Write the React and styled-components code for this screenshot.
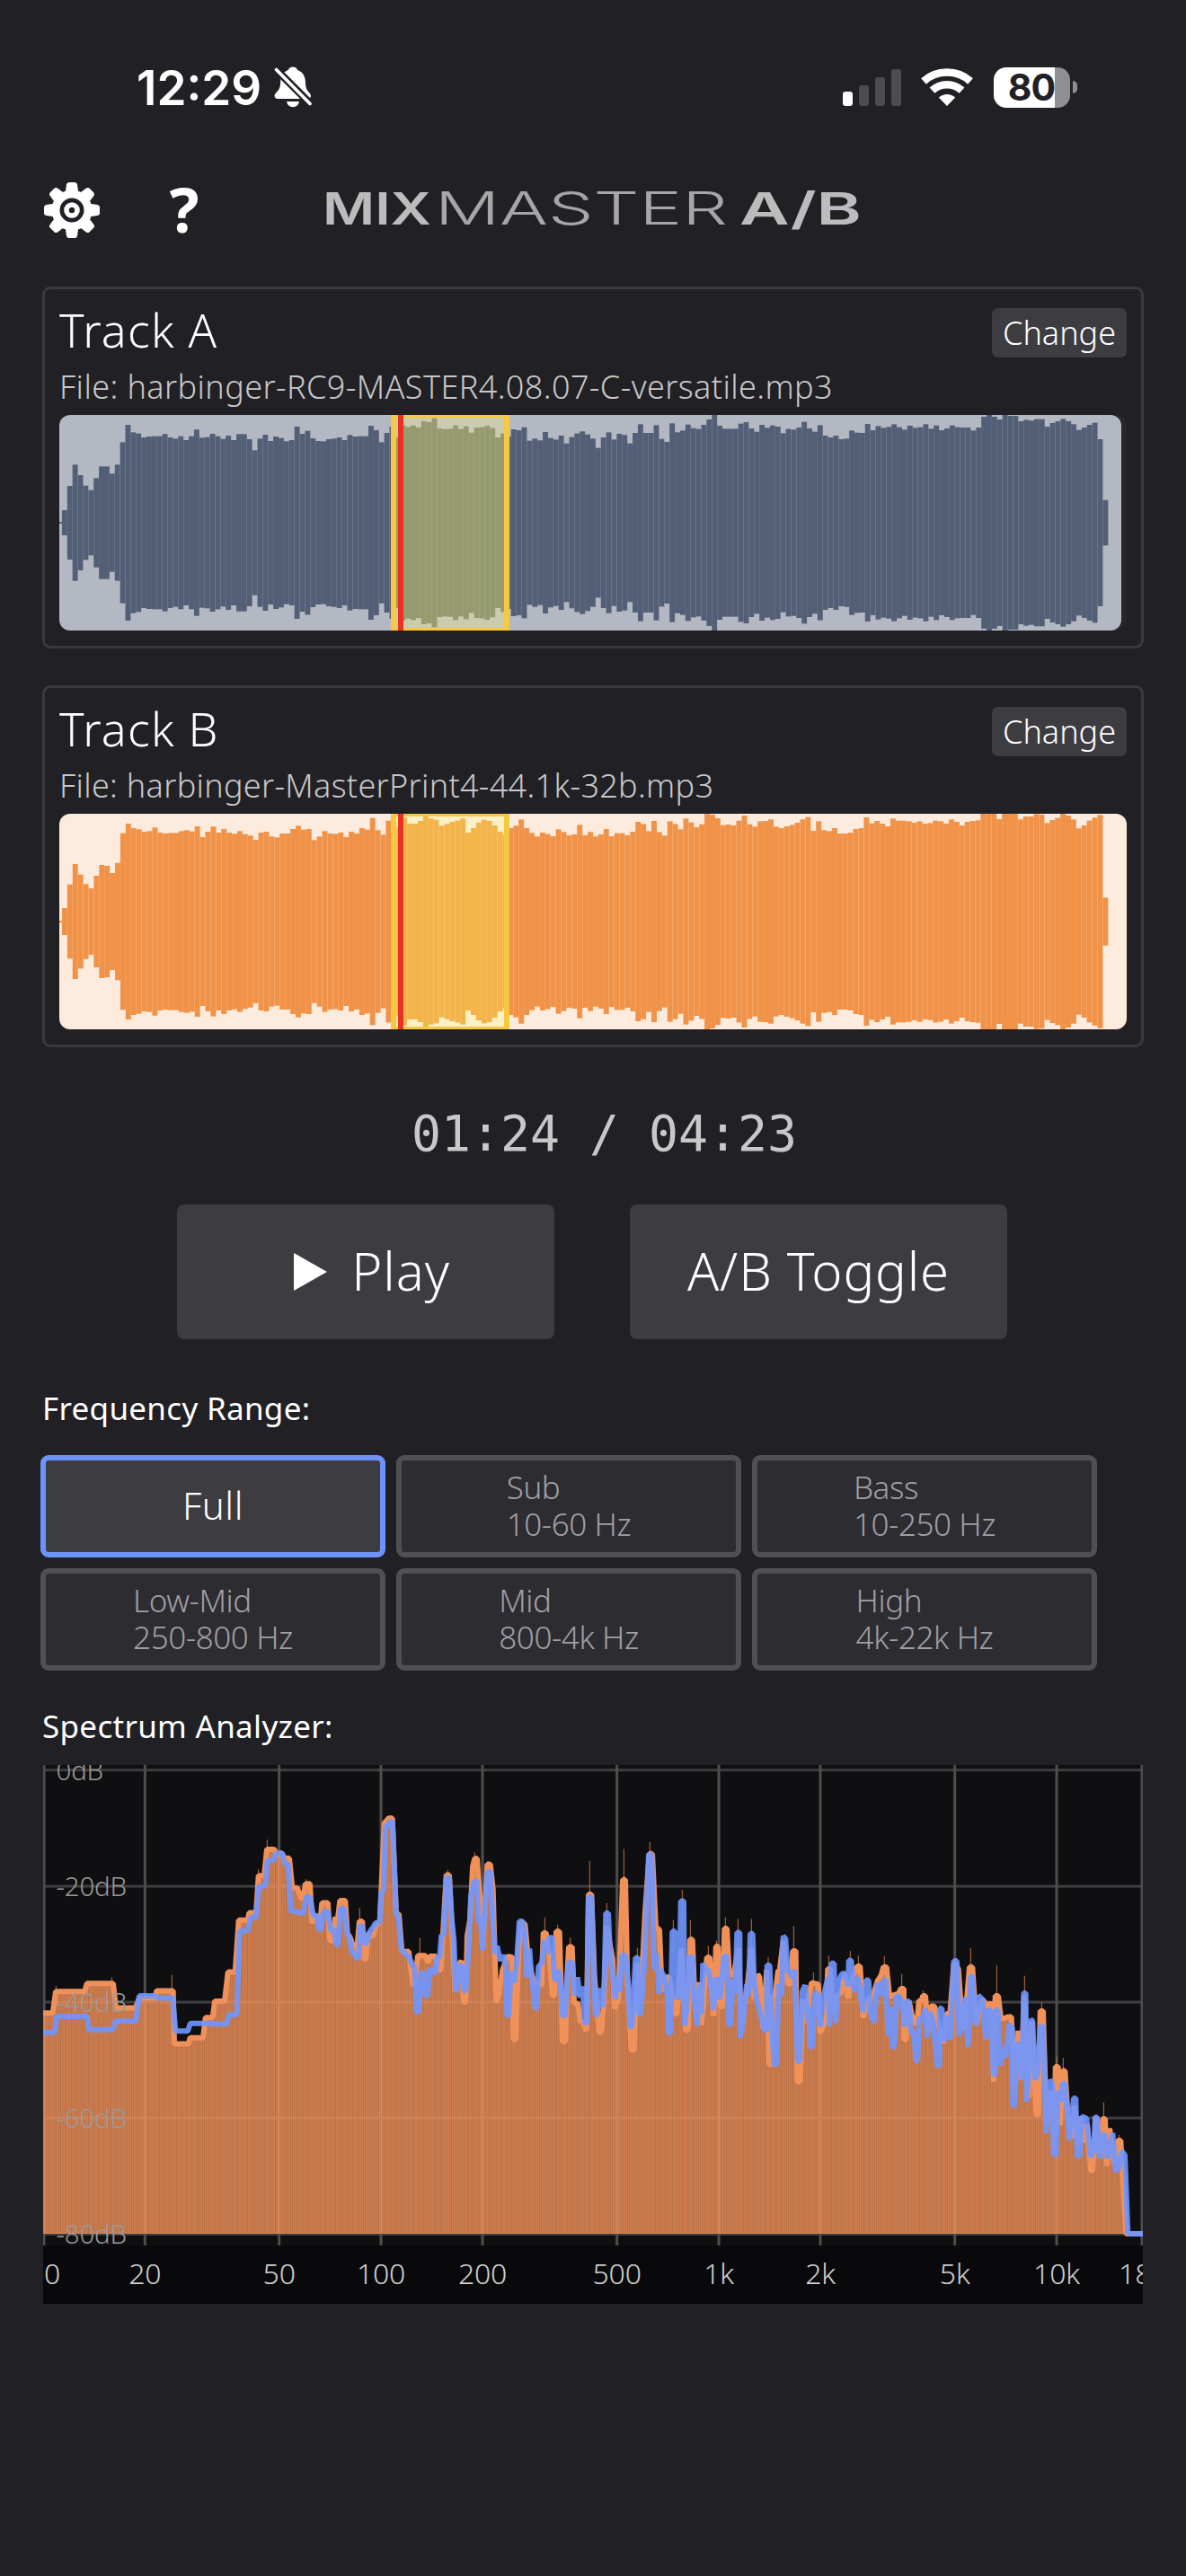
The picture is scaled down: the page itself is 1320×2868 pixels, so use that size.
import React from "react";
import styled, { createGlobalStyle } from "styled-components";

const GlobalStyle = createGlobalStyle`
  * {
    box-sizing: border-box;
  }
  body {
    margin: 0;
    background: #212025;
    color: #fff;
    font-family: "Noto Sans", "Open Sans", sans-serif;
    font-weight: 300;
  }
  button {
    font: inherit;
    color: inherit;
    border: none;
    margin: 0;
    padding: 0;
  }
`;

const Screen = styled.main`
  width: 1320px;
  height: 2868px;
  background: #212025;
  overflow: hidden;
`;

const StatusBar = styled.div`
  display: flex;
  align-items: center;
  height: 194px;
  padding: 0 121px 0 152px;
`;

const Clock = styled.span`
  font-family: Inter, sans-serif;
  font-weight: 600;
  font-size: 53px;
  line-height: 60px;
  padding-top: 2px;
  margin-right: 14px;
`;

const StatusIcons = styled.div`
  display: flex;
  align-items: center;
  margin-left: auto;
`;

const Signal = styled.div`
  display: flex;
  align-items: flex-end;
  gap: 7px;
  height: 41px;
  margin-right: 22px;
`;

const SignalBar = styled.span`
  width: 11px;
  height: ${p => p.$height}px;
  border-radius: 3px;
  background: ${p => (p.$on ? "#fff" : "#4d4c51")};
`;

const Battery = styled.div`
  display: flex;
  align-items: center;
  gap: 3px;
  margin-left: 23px;
`;

const BatteryBody = styled.div`
  width: 85px;
  height: 45px;
  padding-right: 1px;
  border-radius: 14px;
  background: linear-gradient(to right, #fff 80%, #8e8e93 80%);
  color: #212025;
  font-family: Inter, sans-serif;
  font-weight: 700;
  font-size: 41px;
  line-height: 45px;
  letter-spacing: -1px;
  text-align: center;
`;

const BatteryTip = styled.span`
  width: 5px;
  height: 14px;
  border-radius: 0 5px 5px 0;
  background: #8e8e93;
`;

const Header = styled.header`
  display: flex;
  align-items: center;
  height: 80px;
  padding-left: 48px;
`;

const IconButton = styled.button`
  display: flex;
  width: 64px;
  background: transparent;
`;

const HelpButton = styled.button`
  width: 40px;
  margin: 0 135px 0 73px;
  padding-bottom: 4px;
  background: transparent;
  font-weight: 700;
  font-size: 69px;
  line-height: 76px;
`;

const LogoText = styled.text`
  font-family: Inter, sans-serif;
  font-size: 50px;
  font-weight: ${p => p.$weight};
  fill: ${p => p.$color};
`;

const Content = styled.div`
  display: flex;
  flex-direction: column;
  padding: 45px 47px 0;
`;

const Card = styled.section`
  height: 403px;
  padding: 10px 16px 17px;
  margin-bottom: 41px;
  border: 3px solid #3a3a3c;
  border-radius: 9px;
`;

const CardHead = styled.div`
  display: flex;
  justify-content: space-between;
  height: 70px;
`;

const CardTitle = styled.h2`
  margin: 0;
  font-size: 52px;
  font-weight: 300;
  line-height: 70px;
  letter-spacing: 1.2px;
`;

const ChangeButton = styled.button`
  width: 150px;
  height: 55px;
  margin-top: 11px;
  border-radius: 7px;
  background: #3d3c41;
  font-size: 36px;
  line-height: 53px;
`;

const FileName = styled.p`
  margin: 4px 0 6px;
  font-size: 36px;
  line-height: 50px;
  color: #c8c8c8;
  white-space: nowrap;
  letter-spacing: ${p => p.$spacing};
`;

const WaveFrame = styled.div`
  height: 240px;
  border-radius: 12px;
  background: #27272b;
`;

const Wave = styled.svg`
  display: block;
  border-radius: 12px;
  background: ${p => p.$background};
`;

const Time = styled.div`
  margin-top: 15px;
  padding-left: 25px;
  text-align: center;
  font-family: "DejaVu Sans Mono", monospace;
  font-size: 54.8px;
  font-weight: 400;
  line-height: 80px;
  color: #c8c8c8;
`;

const Transport = styled.div`
  display: flex;
  gap: 84px;
  margin: 39px 0 0 150px;
`;

const BigButton = styled.button`
  display: flex;
  align-items: center;
  justify-content: center;
  gap: 27px;
  width: 420px;
  height: 150px;
  padding-bottom: 3px;
  border-radius: 8px;
  background: #3d3c41;
  font-size: 58px;
  letter-spacing: 0.9px;
`;

const PlayIcon = styled.svg`
  width: 37px;
  height: 42px;
  margin: 3px 0 0 14px;
`;

const Label = styled.h3`
  margin: ${p => p.$top}px 0 0;
  font-size: 35px;
  font-weight: 400;
  line-height: 50px;
  letter-spacing: 0.3px;
`;

const Filters = styled.div`
  display: grid;
  grid-template-columns: repeat(3, 384px);
  grid-auto-rows: 114px;
  gap: 12px;
  margin: 27px 0 0 -2px;
`;

const FilterButton = styled.button`
  display: flex;
  align-items: center;
  justify-content: center;
  padding-bottom: ${p => (p.$active ? 4 : 2)}px;
  border: 6px solid ${p => (p.$active ? "#6d93fb" : "#504f54")};
  border-radius: 9px;
  background: ${p => (p.$active ? "#3d3c41" : "#2d2c31")};
  color: ${p => (p.$active ? "#fff" : "#a09fa4")};
  font-size: ${p => (p.$active ? 42 : 35)}px;
  line-height: 41px;
  letter-spacing: ${p => (p.$active ? 0.5 : -0.4)}px;
  text-align: left;
`;

const Analyzer = styled.svg`
  display: block;
  margin: 18px 0 0 1px;
`;

const AxisText = styled.text`
  font-family: "Noto Sans", sans-serif;
  font-size: ${p => p.$size}px;
  font-weight: 300;
  letter-spacing: ${p => p.$spacing}px;
  fill: ${p => p.$color};
`;

// Distance of each bar's top from the top edge, in thirds of a pixel
const WAVE_A = [
  318, 237, 166, 201, 236, 251, 211, 172, 172, 196, 166, 91, 33, 58, 62, 75, 72, 71, 71, 64,
  75, 79, 71, 84, 71, 49, 76, 74, 63, 71, 80, 69, 84, 64, 64, 81, 118, 79, 66, 87,
  72, 77, 88, 84, 39, 63, 53, 78, 87, 88, 81, 79, 75, 84, 67, 72, 71, 71, 36, 51,
  91, 60, 39, 75, 34, 40, 35, 42, 21, 24, 11, 45, 47, 46, 35, 47, 38, 59, 42, 41,
  36, 44, 75, 62, 72, 48, 51, 41, 86, 79, 85, 57, 77, 82, 69, 95, 74, 62, 55, 65,
  79, 110, 75, 58, 82, 63, 67, 95, 60, 31, 60, 60, 34, 80, 90, 28, 58, 52, 32, 44,
  47, 33, 15, 0, 36, 46, 46, 46, 29, 24, 45, 56, 33, 43, 35, 39, 61, 47, 49, 42,
  23, 45, 56, 34, 69, 75, 69, 81, 79, 52, 59, 60, 30, 51, 37, 43, 40, 31, 41, 49,
  36, 43, 41, 31, 46, 35, 51, 45, 35, 41, 42, 42, 52, 42, 6, 0, 6, 15, 0, 3,
  3, 21, 16, 19, 14, 14, 39, 27, 21, 13, 21, 31, 50, 42, 33, 26, 81, 284,
];

const WAVE_B = [
  315, 236, 168, 203, 235, 249, 207, 171, 174, 198, 164, 65, 33, 48, 52, 60, 58, 46, 63, 66,
  64, 64, 58, 55, 59, 42, 78, 60, 43, 63, 51, 63, 67, 58, 68, 73, 87, 63, 60, 76,
  79, 66, 66, 51, 40, 53, 51, 88, 76, 58, 66, 67, 63, 78, 60, 66, 48, 53, 14, 55,
  70, 23, 24, 45, 13, 33, 33, 24, 9, 16, 20, 40, 34, 27, 23, 16, 63, 48, 30, 20,
  24, 39, 60, 70, 48, 40, 19, 48, 64, 76, 63, 68, 75, 52, 61, 72, 69, 37, 72, 61,
  76, 69, 51, 75, 65, 65, 72, 60, 27, 34, 58, 24, 61, 73, 25, 34, 52, 16, 29, 45,
  35, 0, 3, 15, 38, 36, 39, 23, 6, 35, 43, 25, 24, 19, 43, 48, 42, 37, 30, 19,
  11, 57, 25, 55, 58, 48, 66, 66, 63, 51, 48, 12, 32, 24, 33, 42, 16, 23, 23, 25,
  30, 25, 33, 31, 23, 25, 33, 19, 27, 39, 27, 24, 22, 0, 0, 0, 18, 0, 0, 0,
  19, 9, 9, 1, 3, 31, 21, 14, 0, 6, 19, 49, 39, 23, 13, 4, 280,
];

// Spectrum curves as "x,y" pairs in raw chart units, see toX and toY
const SPECTRUM_B = `24,738 56,738 66,679 163,679 170,657 258,657 267,724 333,724 345,697 398,697 403,677 458,677
462,822 509,822 515,805 558,805 566,750 590,750 597,705 630,705 641,626 665,626 677,484 707,484 712,464 735,464
743,363 762,363 771,291 796,291 803,305 820,301 830,315 846,315 856,395 873,397 885,425 892,425 900,385 915,385
922,492 938,470 947,505 955,437 975,437 981,540 993,540 1000,475 1005,500 1015,431 1033,431 1040,520 1048,530
1060,557 1070,580 1080,487 1090,487 1095,590 1102,590 1110,520 1125,530 1135,500 1148,487 1153,405 1163,220
1178,206 1190,206 1203,468 1212,468 1222,570 1245,570 1258,660 1265,660 1275,581 1300,581 1310,600 1315,583
1335,583 1345,620 1352,620 1370,361 1380,361 1390,520 1400,678 1410,610 1420,595 1428,708 1435,708 1440,528
1450,480 1458,340 1465,316 1473,316 1482,420 1492,560 1507,332 1517,332 1526,400 1537,708 1545,690 1558,620
1575,583 1590,585 1594,810 1602,810 1612,560 1620,490 1633,495 1645,600 1665,660 1675,650 1688,665 1694,519
1703,519 1714,580 1725,690 1731,690 1737,515 1748,515 1758,816 1768,816 1773,650 1779,557 1790,557 1797,710
1810,712 1817,762 1826,762 1838,787 1845,414 1855,414 1865,640 1880,790 1888,790 1897,700 1906,500 1925,590
1932,726 1945,700 1959,374 1968,374 1975,645 1988,839 1997,839 2006,600 2018,700 2028,560 2034,461 2048,303
2058,303 2070,505 2082,510 2090,678 2102,640 2115,640 2132,740 2140,740 2155,560 2170,788 2178,780 2183,537
2192,537 2200,700 2215,655 2222,770 2230,700 2240,586 2250,586 2262,745 2268,700 2270,556 2278,556 2285,720
2293,720 2299,507 2307,507 2315,632 2330,632 2345,560 2355,770 2375,670 2388,560 2398,700 2410,632 2416,640
2428,780 2440,620 2448,878 2457,878 2460,692 2468,692 2478,622 2483,622 2495,540 2510,658 2522,658 2527,568
2537,568 2542,925 2552,925 2560,700 2572,765 2580,692 2590,655 2612,659 2618,792 2626,780 2638,750 2644,617
2652,617 2660,730 2675,690 2690,680 2700,630 2712,698 2722,650 2743,610 2752,610 2762,750 2780,700 2795,690
2810,650 2822,635 2830,612 2840,612 2850,692 2880,685 2888,671 2898,671 2898,810 2905,810 2915,705 2930,765
2942,765 2948,704 2958,704 2961,691 2970,691 2980,790 2988,719 3000,719 3010,760 3030,820 3040,740 3052,740
3065,600 3080,618 3092,760 3100,780 3117,612 3127,612 3140,770 3160,700 3180,720 3190,708 3198,925 3203,691
3213,691 3222,752 3235,752 3245,748 3257,748 3268,960 3280,786 3290,920 3300,690 3315,970 3325,760 3340,1015
3348,1015 3353,732 3363,732 3374,1040 3390,950 3400,1110 3404,884 3413,884 3420,1044 3428,895 3436,895
3445,1010 3458,1080 3468,990 3480,1100 3490,1020 3495,1090 3510,1040 3522,1168 3528,1168 3540,1020 3555,1120
3562,1026 3570,1026 3575,1155 3585,1052 3600,1150 3613,1085 3622,1085 3640,1340 3696,1340`;

const SPECTRUM_A = `24,791 62,791 70,747 170,747 177,783 257,783 265,760 333,760 345,691 400,691 405,697 457,697
466,787 507,787 515,766 595,766 600,768 637,768 645,742 671,742 680,514 707,513 717,477 735,476 745,392 766,391
773,322 795,320 801,302 823,302 830,330 842,332 851,460 872,461 882,466 894,464 902,421 915,421 926,472 938,472
945,510 952,510 960,461 975,461 985,512 997,512 1003,552 1009,552 1017,453 1029,453 1040,524 1046,530 1055,570
1060,572 1070,588 1078,586 1082,500 1090,500 1098,548 1104,548 1115,515 1125,505 1135,492 1148,490 1153,408
1161,404 1167,230 1176,225 1183,215 1190,215 1203,470 1210,475 1220,565 1232,575 1243,582 1257,605 1265,615
1270,735 1278,735 1287,625 1297,630 1300,690 1308,690 1316,615 1325,630 1335,625 1340,585 1348,585 1354,525
1362,525 1370,368 1380,368 1388,480 1396,540 1401,675 1407,675 1413,608 1422,610 1429,677 1435,677 1445,560
1452,420 1464,378 1472,378 1477,490 1484,475 1491,566 1497,480 1508,352 1517,352 1525,470 1532,575 1540,555
1550,595 1560,580 1568,600 1573,745 1579,745 1585,625 1597,655 1605,600 1614,487 1625,487 1632,520 1638,640
1648,562 1655,640 1667,725 1673,725 1678,612 1690,600 1697,540 1707,575 1714,532 1724,532 1731,640 1738,650
1745,620 1751,660 1759,745 1767,745 1773,640 1782,595 1792,605 1798,690 1808,640 1817,695 1825,665 1833,765
1840,765 1845,421 1855,421 1862,600 1868,745 1875,740 1880,670 1893,722 1898,640 1903,465 1911,465 1918,590
1927,640 1935,700 1942,640 1950,680 1956,580 1968,580 1978,660 1984,775 1990,775 2002,587 2010,587 2012,740
2020,740 2032,600 2046,305 2056,305 2064,620 2073,575 2080,685 2086,620 2098,640 2108,690 2112,793 2118,793
2125,515 2134,515 2140,700 2148,690 2153,432 2163,432 2166,772 2174,720 2182,585 2192,585 2198,700 2208,773
2217,660 2222,740 2227,602 2236,620 2245,620 2252,650 2262,730 2272,640 2284,700 2297,583 2306,583 2314,770
2320,770 2327,645 2334,685 2341,518 2350,518 2352,805 2360,770 2373,660 2380,690 2385,521 2393,521 2398,650
2406,700 2420,745 2432,785 2440,785 2441,607 2450,607 2456,745 2464,878 2472,878 2480,660 2485,670 2490,690
2495,528 2503,535 2510,620 2525,640 2533,620 2543,870 2550,870 2558,680 2568,662 2577,760 2580,720 2585,830
2592,830 2602,680 2612,690 2618,775 2630,690 2645,640 2650,775 2656,602 2665,602 2670,765 2680,650 2692,630
2702,630 2712,665 2714,594 2722,594 2732,680 2745,640 2755,700 2762,735 2772,648 2780,648 2786,735 2798,765
2810,655 2822,690 2830,648 2838,648 2845,800 2855,720 2860,830 2867,830 2873,690 2885,695 2897,740 2900,775
2906,705 2915,705 2922,790 2932,790 2938,868 2944,868 2950,750 2960,760 2970,725 2976,805 2985,735 2995,760
3010,882 3017,882 3017,725 3025,725 3033,815 3045,745 3053,810 3065,595 3075,595 3083,800 3093,760 3102,695
3112,830 3118,750 3121,636 3127,640 3135,760 3142,770 3147,690 3160,700 3172,810 3178,730 3188,730 3197,905
3203,905 3205,730 3212,730 3220,880 3230,830 3238,860 3250,768 3260,780 3262,990 3268,990 3276,825 3285,820
3293,920 3298,683 3305,683 3307,980 3315,900 3321,755 3328,760 3336,920 3345,900 3353,775 3363,775 3373,1065
3378,1000 3385,920 3393,930 3398,1125 3406,1125 3412,950 3420,980 3428,930 3436,930 3445,1020 3451,1085
3460,1010 3465,970 3472,970 3477,1130 3485,1125 3492,1020 3508,1025 3522,1130 3533,1110 3536,1022 3543,1022
3552,1135 3562,1070 3568,1070 3578,1135 3595,1065 3605,1170 3615,1160 3626,1115 3636,1125 3646,1340 3696,1340`;

const PEAKS = [
  [67, 664], [253, 640], [454, 634], [743, 346], [772, 265], [902, 373], [1081, 452], [1282, 533],
  [1375, 347], [1465, 300], [1699, 477], [1742, 497], [1784, 532], [1849, 323], [1906, 438],
  [1963, 290], [2008, 560], [2050, 271], [2128, 484], [2158, 402], [2185, 484], [2245, 555],
  [2272, 540], [2302, 477], [2344, 481], [2389, 481], [2445, 585], [2530, 500], [2596, 627],
  [2647, 581], [2719, 568], [2746, 581], [2833, 583], [2891, 631], [2962, 676], [3121, 560],
  [3208, 608], [3301, 636], [3358, 708], [3409, 857], [3430, 860], [3565, 981], [3616, 1070],
];

const DB_LINES = [
  { y: 75, label: "0dB" },
  { y: 392, label: "-20dB" },
  { y: 708, label: "-40dB" },
  { y: 1024, label: "-60dB" },
  { y: 1341, label: "-80dB" },
];

const FREQ_LINES = [
  { x: 27, label: "10" },
  { x: 364, label: "20" },
  { x: 812, label: "50" },
  { x: 1152, label: "100" },
  { x: 1491, label: "200" },
  { x: 1940, label: "500" },
  { x: 2280, label: "1k" },
  { x: 2619, label: "2k" },
  { x: 3068, label: "5k" },
  { x: 3408, label: "10k" },
  { x: 3693, label: "18k" },
];

const FILTERS = [
  { name: "Full", active: true },
  { name: "Sub", range: "10-60 Hz" },
  { name: "Bass", range: "10-250 Hz" },
  { name: "Low-Mid", range: "250-800 Hz" },
  { name: "Mid", range: "800-4k Hz" },
  { name: "High", range: "4k-22k Hz" },
];

const TRACKS = [
  {
    name: "Track A",
    file: "harbinger-RC9-MASTER4.08.07-C-versatile.mp3",
    spacing: "0.4px",
    width: 1182,
    data: WAVE_A,
    colors: { background: "#b4b8c2", bar: "#535f77", loopBackground: "#cacbb0", loopBar: "#959a6f", edge: "#f8c83f" },
  },
  {
    name: "Track B",
    file: "harbinger-MasterPrint4-44.1k-32b.mp3",
    spacing: "0.3px",
    width: 1188,
    data: WAVE_B,
    colors: { background: "#fdebdd", bar: "#f09248", loopBackground: "#fbf0c6", loopBar: "#f3b44b", edge: "#f5c840" },
  },
];

const BellOffIcon = () => (
  <svg width="43" height="48" viewBox="0 0 43 48">
    <path
      d="M21 1.500c2.800 0 4.600 1.500 5.200 3.600 5.800 2 8.500 6.800 8.700 13 .2 6.800 1.500 9.400 4.600 12.500 1.600 1.600 1.500 3 1.300 4.200-.4 1.500-1.700 2.200-3.500 2.200H4.400c-2.200 0-3.600-1-3.800-2.800-.2-1.500.6-2.800 2-4.200C5.900 26.700 7 24.200 7.200 18c.2-6.200 3-11 8.600-12.900.6-2.100 2.400-3.600 5.200-3.600z"
      fill="#fff"
    />
    <path d="M14 40h14c-.8 3.800-3.400 6.200-7 6.200S14.800 43.800 14 40z" fill="#fff" />
    <path d="M-1 1l42 42" stroke="#212025" strokeWidth="8.500" />
    <path d="M2.500 4.500l37.500 38" stroke="#fff" strokeWidth="3.600" strokeLinecap="round" />
  </svg>
);

const WifiIcon = () => (
  <svg width="58" height="43" viewBox="0 0 58 43">
    <g fill="none" stroke="#fff" strokeWidth="8.500">
      <path d="M3 14.500C17.500 1.300 40.500 1.300 55 14.500" />
      <path d="M12.500 24.600c9.300-8.600 23.700-8.600 33 0" />
    </g>
    <path d="M29 42l-9.200-9.400c5.200-4.700 13.200-4.700 18.400 0z" fill="#fff" />
  </svg>
);

const GearIcon = () => (
  <svg width="64" height="64" viewBox="-32 -32 64 64">
    <g fill="#fff">
      {[0, 45, 90, 135, 180, 225, 270, 315].map(angle => (
        <path
          key={angle}
          transform={`rotate(${angle})`}
          d="M-7.500-18L-6-28.500Q-5.600-31-3.200-31H3.200Q5.600-31 6-28.500L7.500-18z"
        />
      ))}
    </g>
    <circle r="18" fill="none" stroke="#fff" strokeWidth="9" />
    <circle r="6" fill="none" stroke="#fff" strokeWidth="5.600" />
  </svg>
);

const Logo = () => (
  <svg width="600" height="72" viewBox="0 0 600 72">
    <LogoText $weight={600} $color="#bcbcbc" x="-1" y="52" textLength="121" lengthAdjust="spacingAndGlyphs">
      MIX
    </LogoText>
    <LogoText $weight={300} $color="#a6a6a6" x="124" y="52" textLength="326" lengthAdjust="spacingAndGlyphs">
      MASTER
    </LogoText>
    <LogoText $weight={600} $color="#bcbcbc" x="463" y="52" textLength="136" lengthAdjust="spacingAndGlyphs">
      A/B
    </LogoText>
  </svg>
);

const Waveform = ({ id, width, data, colors }) => {
  const step = width / 201;
  const bars = data.map((inset, i) => (
    <rect key={i} x={(i + 0.5) * step} y={inset / 3} width={step} height={240 - (inset * 2) / 3} />
  ));

  return (
    <Wave width={width} height="240" $background={colors.background}>
      <clipPath id={id}>
        <rect x="372" y="0" width="126" height="240" />
      </clipPath>
      <g fill={colors.bar}>
        <rect x="0" y="119" width="3" height="2" />
        {bars}
      </g>
      <g clipPath={`url(#${id})`} fill={colors.loopBar}>
        <rect x="372" y="0" width="126" height="240" fill={colors.loopBackground} />
        {bars}
      </g>
      <g fill={colors.edge}>
        <rect x="369" y="0" width="132" height="3" />
        <rect x="369" y="237" width="132" height="3" />
        <rect x="369" y="0" width="6" height="240" />
        <rect x="495" y="0" width="6" height="240" />
      </g>
      <rect x="377" y="0" width="6" height="240" fill="#e93223" />
    </Wave>
  );
};

const Track = ({ name, file, spacing, ...wave }) => (
  <Card>
    <CardHead>
      <CardTitle>{name}</CardTitle>
      <ChangeButton>Change</ChangeButton>
    </CardHead>
    <FileName $spacing={spacing}>File: {file}</FileName>
    <WaveFrame>
      <Waveform id={name.replace(" ", "-")} {...wave} />
    </WaveFrame>
  </Card>
);

const toX = x => (x - 24) / 3;
const toY = y => (y - 61) / 2.45;

const toPoints = curve =>
  curve
    .split(/\s+/)
    .map(pair => {
      const [x, y] = pair.split(",");
      return `${toX(x).toFixed(1)},${toY(y).toFixed(1)}`;
    })
    .join(" ");

const Spectrum = () => {
  const pointsA = toPoints(SPECTRUM_A);
  const pointsB = toPoints(SPECTRUM_B);
  const bottom = toY(1340);

  return (
    <Analyzer width="1224" height="600">
      <defs>
        <pattern id="bins" width="2.390" height="10" patternUnits="userSpaceOnUse">
          <rect width="2.390" height="10" fill="#fd985e" />
          <rect width="0.600" height="10" fill="#d88250" />
        </pattern>
      </defs>
      <rect width="1224" height="535" fill="#0f0f11" />
      <rect y="535" width="1224" height="65" fill="#09090b" />
      {DB_LINES.map(line => (
        <rect key={line.label} y={toY(line.y) - 1.5} width="1224" height="3" fill="#3e3e40" />
      ))}
      {FREQ_LINES.map(line => (
        <rect key={line.label} x={toX(line.x) - 1.5} width="3" height="535" fill="#4e4e4f" />
      ))}
      <polygon points={`0,${bottom} ${pointsB} 1224,${bottom}`} fill="url(#bins)" opacity="0.8" />
      {PEAKS.map(([x, y]) => (
        <rect key={x} x={toX(x) - 0.5} y={toY(y)} width="1" height="36" fill="#b86f47" />
      ))}
      <polyline points={pointsB} fill="none" stroke="#f0915a" strokeWidth="6" strokeLinejoin="bevel" />
      <polyline
        points={pointsA}
        fill="none"
        stroke="#6f96ff"
        strokeWidth="6"
        strokeLinejoin="bevel"
        opacity="0.9"
      />
      {DB_LINES.map(line => (
        <AxisText
          key={line.label}
          $size={29.500}
          $spacing={-0.2}
          $color="#9a9a9a"
          x="14.500"
          y={toY(line.y + 27)}
        >
          {line.label}
        </AxisText>
      ))}
      {FREQ_LINES.map(line => (
        <AxisText
          key={line.label}
          $size={32}
          $spacing={-0.2}
          $color="#d0d0d0"
          x={toX(line.x)}
          y={toY(1477)}
          textAnchor="middle"
        >
          {line.label}
        </AxisText>
      ))}
    </Analyzer>
  );
};

const App = () => {
  return (
    <Screen>
      <GlobalStyle />
      <StatusBar>
        <Clock>12:29</Clock>
        <BellOffIcon />
        <StatusIcons>
          <Signal>
            <SignalBar $height={16} $on />
            <SignalBar $height={23} />
            <SignalBar $height={32} />
            <SignalBar $height={41} />
          </Signal>
          <WifiIcon />
          <Battery>
            <BatteryBody>80</BatteryBody>
            <BatteryTip />
          </Battery>
        </StatusIcons>
      </StatusBar>
      <Header>
        <IconButton>
          <GearIcon />
        </IconButton>
        <HelpButton>?</HelpButton>
        <Logo />
      </Header>
      <Content>
        {TRACKS.map(track => (
          <Track key={track.name} {...track} />
        ))}
        <Time>01:24 / 04:23</Time>
        <Transport>
          <BigButton>
            <PlayIcon viewBox="0 0 37 42">
              <path d="M0 0L37 21L0 42z" fill="#fff" />
            </PlayIcon>
            Play
          </BigButton>
          <BigButton>A/B Toggle</BigButton>
        </Transport>
        <Label $top={52}>Frequency Range:</Label>
        <Filters>
          {FILTERS.map(filter => (
            <FilterButton key={filter.name} $active={filter.active}>
              <span>
                {filter.name}
                {filter.range && <br />}
                {filter.range}
              </span>
            </FilterButton>
          ))}
        </Filters>
        <Label $top={37}>Spectrum Analyzer:</Label>
        <Spectrum />
      </Content>
    </Screen>
  );
};

export default App;
